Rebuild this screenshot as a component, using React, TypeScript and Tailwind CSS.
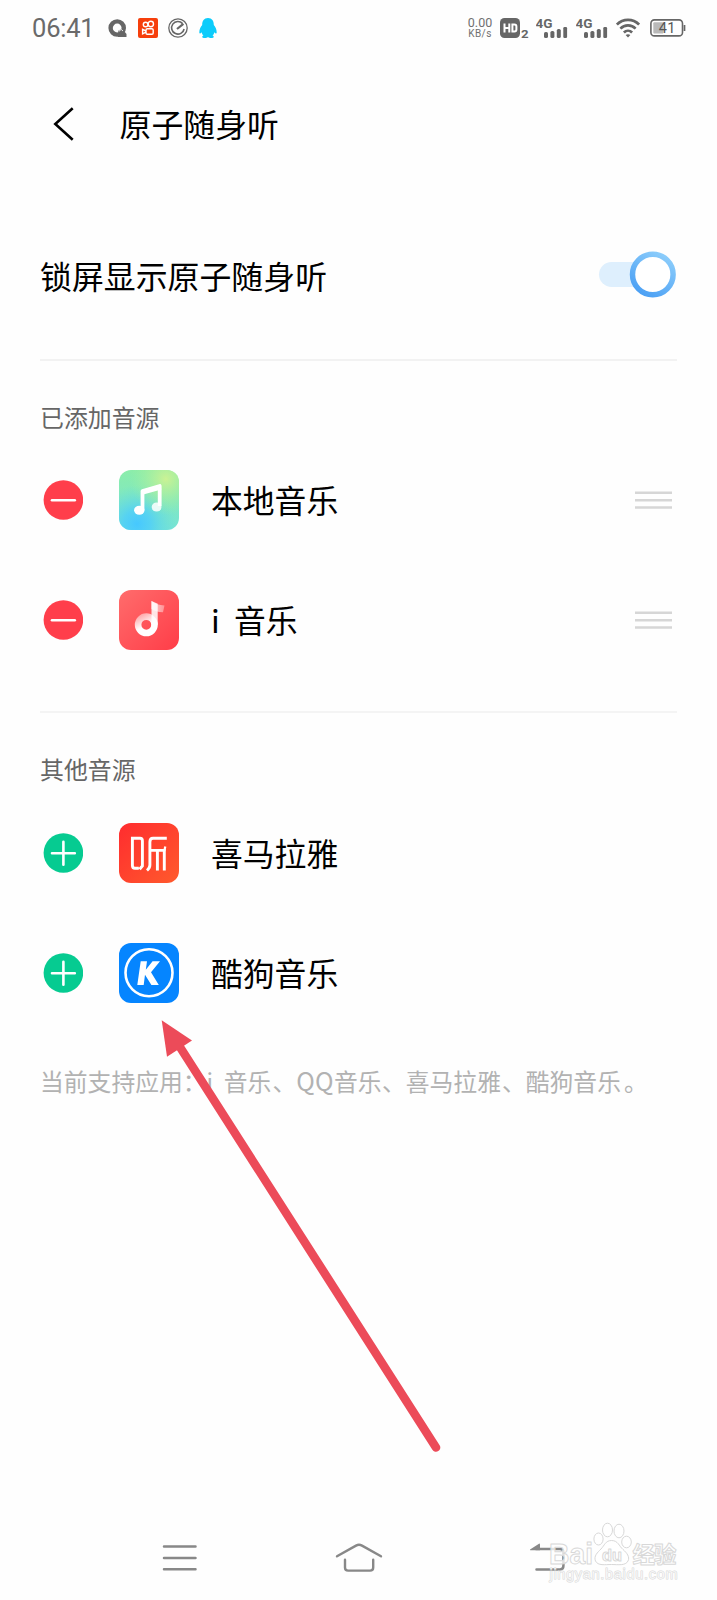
import React from "react";

const CJK = "font-['Noto_Sans_CJK_SC',sans-serif]";

function SignalBars() {
  return (
    <svg className="block h-[24px] w-[32px]" viewBox="0 0 32 24">
      <text x="-0.5" y="11.8" fontFamily="Roboto, sans-serif" fontSize="13.5" fontWeight="700" fill="#666" textLength="17">4G</text>
      <g fill="#666">
        <rect x="8" y="16" width="4" height="6" rx="1.6" />
        <rect x="14.4" y="15" width="4" height="7" rx="1.6" />
        <rect x="20.8" y="13" width="4" height="9" rx="1.6" />
        <rect x="27.3" y="11" width="3.8" height="11" rx="1.2" />
      </g>
    </svg>
  );
}

function StatusBar() {
  return (
    <header className="flex h-[56px] items-center pl-[32px] pr-[31px]">
      <span className="mt-px w-[75px] font-['Roboto',sans-serif] text-[25.5px] leading-none tracking-[-0.2px] text-[#6a6a6a]">06:41</span>
      <div className="flex items-center">
        <svg className="mr-[11px] block h-[20px] w-[20px]" viewBox="0 0 20 20">
          <circle cx="10.2" cy="10" r="6.6" fill="none" stroke="#666" strokeWidth="4.4" />
          <path d="M11 13 L15 10.5 L19.5 16 V19 H11 Z" fill="#666" />
          <path d="M11.6 13.6 L14.2 11.4 L16 13" fill="none" stroke="#fefefe" strokeWidth=".9" />
        </svg>
        <svg className="mr-[10px] block h-[20px] w-[20px]" viewBox="0 0 20 20">
          <rect width="20" height="20" rx="2" fill="#f63f0c" />
          <g fill="none" stroke="#fff" strokeWidth="1.4">
            <circle cx="7.6" cy="6.5" r="2.3" />
            <circle cx="12.8" cy="6" r="2.7" />
            <rect x="8" y="10.7" width="7.2" height="5.6" rx="1.3" />
            <path d="M8 13 L4.6 11.4 V15.9 L8 14.2" />
          </g>
        </svg>
        <svg className="mr-[11px] block h-[20px] w-[20px]" viewBox="0 0 20 20">
          <g fill="none" stroke="#666">
            <circle cx="10" cy="10" r="9.2" strokeWidth="1.3" />
            <path d="M14.6 5.6 A6.3 6.3 0 1 0 16.1 11" strokeWidth="1.6" />
            <path d="M9 11 L15.4 5.8" strokeWidth="2.2" />
          </g>
        </svg>
        <svg className="block h-[20px] w-[18px]" viewBox="0 0 18 20">
          <path d="M9 0 C5 0 3.1 3 3.2 7.1 C1.6 9 .3 11.4 .3 14.4 C.4 16 1.5 15.8 2.6 14.2 C3 15.8 3.6 16.7 4.5 17.4 C2.4 18.3 3 20 5.6 20 C7.2 20 8.2 19.6 9 19 C9.8 19.6 10.8 20 12.4 20 C15 20 15.6 18.3 13.5 17.4 C14.4 16.7 15 15.8 15.4 14.2 C16.5 15.8 17.6 16 17.7 14.4 C17.7 11.4 16.4 9 14.8 7.1 C14.9 3 13 0 9 0Z" fill="#0dccfb" />
        </svg>
      </div>
      <div className="ml-auto flex items-center">
        <div className="mr-[7px] w-[26px] text-center font-['Roboto',sans-serif] text-[#707070]">
          <div className="text-[12.5px] leading-[12px]">0.00</div>
          <div className="text-[10px] leading-[10px] tracking-[0.4px]">KB/s</div>
        </div>
        <svg className="mr-[7px] block h-[24px] w-[29px]" viewBox="0 0 29 24">
          <rect x="0" y="2" width="20" height="20" rx="4.5" fill="#666" />
          <g fill="none" stroke="#fff" strokeWidth="2">
            <path d="M4.5 7.5 V16.5 M9.3 7.5 V16.5 M4.5 12 H9.3" />
            <path d="M12.4 8.4 H14.4 Q16.4 8.4 16.4 10.4 V13.6 Q16.4 15.6 14.4 15.6 H12.4 Z" />
          </g>
          <text x="21" y="22" fontFamily="Roboto, sans-serif" fontSize="11.5" fontWeight="700" fill="#666" textLength="7.6" lengthAdjust="spacingAndGlyphs">2</text>
        </svg>
        <div className="mr-[8px]"><SignalBars /></div>
        <div className="mr-[8px]"><SignalBars /></div>
        <svg className="mr-[10px] block h-[20px] w-[24px]" viewBox="0 0 24 20">
          <g fill="none" stroke="#666" strokeWidth="2.7">
            <path d="M.9 6.6 C7 .4 17 .4 23.1 6.6" />
            <path d="M4.4 10.6 C8.6 6.4 15.4 6.4 19.6 10.6" />
            <path d="M7.9 14.4 C10.2 12.2 13.8 12.2 16.1 14.4" />
          </g>
          <path d="M9.6 17 Q12 15.4 14.4 17 L12 19.4Z" fill="#666" />
        </svg>
        <svg className="block h-[18px] w-[36px]" viewBox="0 0 36 18">
          <rect x=".9" y=".9" width="31.6" height="16" rx="3.5" fill="none" stroke="#666" strokeWidth="1.6" />
          <path d="M34.5 6 V12" stroke="#666" strokeWidth="1.7" />
          <rect x="3.3" y="3.3" width="10.2" height="11.3" rx="1" fill="#b9b9b9" />
          <text x="8.8" y="14.2" fontFamily="Roboto, sans-serif" fontSize="14.5" fill="#555" textLength="16.5">41</text>
        </svg>
      </div>
    </header>
  );
}

function LocalMusicIcon() {
  return (
    <svg className="block h-[60px] w-[60px]" viewBox="0 0 60 60">
      <defs>
        <linearGradient id="lm" x1="0" y1="0" x2="0" y2="1">
          <stop offset="0" stopColor="#8bedaa" />
          <stop offset="1" stopColor="#76e3d6" />
        </linearGradient>
        <radialGradient id="lmb" cx=".3" cy=".9" r=".65">
          <stop offset="0" stopColor="#46c8ff" />
          <stop offset=".35" stopColor="#50cff8" stopOpacity=".85" />
          <stop offset="1" stopColor="#66dddd" stopOpacity="0" />
        </radialGradient>
        <radialGradient id="lmy" cx=".78" cy=".15" r=".6">
          <stop offset="0" stopColor="#cbf294" />
          <stop offset="1" stopColor="#a0efa0" stopOpacity="0" />
        </radialGradient>
      </defs>
      <rect width="60" height="60" rx="12" fill="url(#lm)" />
      <rect width="60" height="60" rx="12" fill="url(#lmb)" />
      <rect width="60" height="60" rx="12" fill="url(#lmy)" />
      <path d="M23.5 40 V21 L40.7 16 V36" fill="none" stroke="#fff" strokeWidth="3.8" strokeLinejoin="round" />
      <path d="M23 23.4 L42 18" stroke="#fff" strokeWidth="3" />
      <ellipse cx="20.3" cy="40.2" rx="5.2" ry="4.5" fill="#fff" />
      <ellipse cx="37.6" cy="37" rx="4.9" ry="4.6" fill="#fff" fillOpacity=".85" />
    </svg>
  );
}

function IMusicIcon() {
  return (
    <svg className="block h-[60px] w-[60px]" viewBox="0 0 60 60">
      <defs>
        <linearGradient id="im" x1="0" y1="0" x2="1" y2="1">
          <stop offset="0" stopColor="#ff6c6c" />
          <stop offset="1" stopColor="#ff3d48" />
        </linearGradient>
        <linearGradient id="imr" x1="0" y1="0" x2=".5" y2="1">
          <stop offset="0" stopColor="#fff" stopOpacity=".5" />
          <stop offset=".65" stopColor="#fff" />
        </linearGradient>
        <linearGradient id="imf" x1="0" y1="0" x2="1" y2="0">
          <stop offset="0" stopColor="#fff" stopOpacity=".9" />
          <stop offset="1" stopColor="#fff" stopOpacity=".45" />
        </linearGradient>
      </defs>
      <rect width="60" height="60" rx="12" fill="url(#im)" />
      <circle cx="27.3" cy="34.8" r="8.2" fill="none" stroke="url(#imr)" strokeWidth="6.6" />
      <path d="M32.5 11 L38.7 13.8 V34.8 H32.5Z" fill="#fff" fillOpacity=".85" />
      <path d="M32.5 11 C36 14 40 15 45.5 15.4 L44 22.2 C39 22 35 21 32.5 19Z" fill="url(#imf)" fillOpacity=".8" />
    </svg>
  );
}

function XimalayaIcon() {
  return (
    <svg className="block h-[60px] w-[60px]" viewBox="0 0 60 60">
      <defs>
        <linearGradient id="xm" x1="0" y1="0" x2="1" y2="1">
          <stop offset="0" stopColor="#ff2c2f" />
          <stop offset="1" stopColor="#ff5a2c" />
        </linearGradient>
      </defs>
      <rect width="60" height="60" rx="12" fill="url(#xm)" />
      <g fill="none" stroke="#fff" strokeWidth="2.9">
        <path d="M19.8 45.3 H16 Q13.4 45.3 13.4 42.5 V15.3 H21 Q23.4 15.3 23.4 18 V43 L20.6 46.3" />
        <path d="M47.8 15.2 H34 Q30.9 15.2 30.9 19 V42 Q30.9 45 28 47.5" />
        <path d="M30.9 27.4 H45.3 V47.5 M38.4 27.4 V47.5" />
        <path d="M45.3 28 L46.3 23.5" strokeWidth="2.2" />
      </g>
    </svg>
  );
}

function KugouIcon() {
  return (
    <svg className="block h-[60px] w-[60px]" viewBox="0 0 60 60">
      <rect width="60" height="60" rx="12" fill="#0585ff" />
      <circle cx="30" cy="29.8" r="23.5" fill="none" stroke="#fff" strokeWidth="2.6" />
      <path d="M21.7 18.2 H28 L26.8 26.8 L33.6 18.2 H41 L32 29.2 L39.8 42 H32.4 L26 31.8 L24.7 42 H18.3Z" fill="#fff" />
    </svg>
  );
}

function ToggleMark({ add }: { add?: boolean }) {
  return (
    <svg className="block h-[40px] w-[40px]" viewBox="0 0 40 40">
      <circle cx="20.4" cy="20" r="19.8" fill={add ? "#06cb91" : "#ff3e4b"} />
      <path d={add ? "M9 20.3 H31.8 M20.4 8.8 V31.8" : "M9 20.3 H31.8"} stroke="#fff" strokeWidth="2.6" strokeLinecap="round" />
    </svg>
  );
}

function DragHandle() {
  return (
    <svg className="ml-auto block h-[20px] w-[37px]" viewBox="0 0 37 20">
      <path d="M0 2.8 H37 M0 10.2 H37 M0 17.5 H37" stroke="#d6d6d6" strokeWidth="2.6" />
    </svg>
  );
}

function SourceRow({ name, icon, add }: { name: string; icon: React.ReactNode; add?: boolean }) {
  return (
    <li className="flex h-[120px] items-center pl-[3px] pr-[5px]">
      <ToggleMark add={add} />
      <div className="ml-[36px]">{icon}</div>
      <span className={`ml-[32px] whitespace-pre text-[31.8px] leading-none text-black ${CJK}`}>{name}</span>
      {!add && <DragHandle />}
    </li>
  );
}

function SectionLabel({ children }: { children: React.ReactNode }) {
  return <h2 className={`flex h-[46px] items-center text-[23.9px] leading-none text-[#666] ${CJK}`}>{children}</h2>;
}

function Watermark() {
  return (
    <svg className="absolute left-[546px] top-[1518px] h-[70px] w-[136px]" viewBox="0 0 136 70">
      <g fill="#fff" fillOpacity=".75" stroke="#d8d8d8" strokeWidth="1" strokeLinejoin="round">
        <text x="3" y="45.5" fontFamily="'Liberation Sans', sans-serif" fontSize="30" fontWeight="700" textLength="44" lengthAdjust="spacingAndGlyphs">Bai</text>
        <ellipse cx="52.5" cy="21" rx="4.6" ry="6" />
        <ellipse cx="61.5" cy="12" rx="5" ry="6.8" />
        <ellipse cx="73" cy="13" rx="5" ry="6.8" />
        <ellipse cx="80.5" cy="24" rx="4.8" ry="5.8" />
        <path d="M65.5 22.5 C72 22.5 73 28 77 31.5 C81 35 84 39 82 43 C79.5 48 72 46.5 65.5 46.5 C59 46.5 52 48 49.5 43 C47.5 38 51.5 34.5 55 31 C58.5 27.5 59.5 22.5 65.5 22.5Z" />
        <text x="56" y="43" fontFamily="'Liberation Sans', sans-serif" fontSize="17" fontWeight="700" textLength="20" lengthAdjust="spacingAndGlyphs">du</text>
        <text x="86.5" y="45" fontFamily="'Noto Sans CJK SC', sans-serif" fontSize="22.5" fontWeight="700" textLength="44">经验</text>
        <text x="3.5" y="61" fontFamily="'Liberation Sans', sans-serif" fontSize="14.5" textLength="128" paintOrder="stroke">jingyan.baidu.com</text>
      </g>
    </svg>
  );
}

export default function App() {
  return (
    <div className="relative flex h-[1600px] w-[717px] flex-col overflow-hidden bg-[#fefefe]">
      <StatusBar />
      <div className="flex h-[136px] items-center pl-[52px]">
        <svg className="block h-[36px] w-[24px]" viewBox="0 0 24 36">
          <path d="M20.7 2.3 L3.3 18 L20.7 33.7" fill="none" stroke="#000" strokeWidth="2.6" />
        </svg>
        <h1 className={`ml-[43.5px] text-[31.9px] leading-none text-black ${CJK}`}>原子随身听</h1>
      </div>
      <main className="flex flex-col px-[40px]">
        <div className="flex h-[169px] items-center justify-between border-b-2 border-[#f2f2f2] pr-px">
          <span className={`text-[31.9px] leading-none text-black ${CJK}`}>锁屏显示原子随身听</span>
          <svg className="mb-[3px] block h-[48px] w-[78px]" viewBox="0 0 78 48">
            <defs>
              <linearGradient id="ring" x1=".8" y1="0" x2=".2" y2="1">
                <stop offset="0" stopColor="#8ccdfb" />
                <stop offset="1" stopColor="#4a9ff4" />
              </linearGradient>
            </defs>
            <rect x="1" y="12" width="60" height="25" rx="12.5" fill="#deeffd" />
            <circle cx="54.8" cy="24.5" r="20.3" fill="#fff" stroke="url(#ring)" strokeWidth="5.5" />
          </svg>
        </div>
        <section className="flex h-[352px] flex-col border-b-2 border-[#f4f4f4] pt-[33px]">
          <SectionLabel>已添加音源</SectionLabel>
          <ul>
            <SourceRow name="本地音乐" icon={<LocalMusicIcon />} />
            <SourceRow name="i  音乐" icon={<IMusicIcon />} />
          </ul>
        </section>
        <section className="flex flex-col pt-[33px]">
          <SectionLabel>其他音源</SectionLabel>
          <ul className="mt-px">
            <SourceRow name="喜马拉雅" icon={<XimalayaIcon />} add />
            <SourceRow name="酷狗音乐" icon={<KugouIcon />} add />
          </ul>
        </section>
        <p className={`mt-[35px] h-[24px] whitespace-pre text-[23.8px] leading-[24px] text-[#b2b2b2] ${CJK}`}>
          当前支持应用：i{"  "}音乐<span className="ml-px">、</span><span className="text-[25px] leading-none tracking-[0.3px]">QQ</span>音乐<span className="ml-[0.5px]">、</span>喜马拉雅<span className="ml-px">、</span>酷狗音乐<span className="ml-[3px]">。</span>
        </p>
      </main>
      <nav className="mt-auto flex h-[84px] items-center pl-[162px]">
        <svg className="block h-[32px] w-[36px]" viewBox="0 0 36 32">
          <path d="M2 4.6 H33.5 M2 16 H33.5 M2 27.3 H33.5" stroke="#888" strokeWidth="2.5" strokeLinecap="round" />
        </svg>
        <svg className="ml-[135px] block h-[32px] w-[52px]" viewBox="0 0 52 32">
          <g fill="none" stroke="#888" strokeWidth="2.4" strokeLinecap="round">
            <path d="M4 14.3 L23 3.6 Q26 1.9 29 3.6 L48 14.3" />
            <path d="M12 17.8 V25.5 Q12 28.6 15.1 28.6 H37.1 Q40.2 28.6 40.2 25.5 V17.8" />
          </g>
        </svg>
        <svg className="ml-[143px] block h-[32px] w-[38px]" viewBox="0 0 38 32">
          <path d="M8 7 H32 Q35.4 7 35.4 10.4 V24 Q35.4 27.4 32 27.4 H8.5" fill="none" stroke="#888" strokeWidth="2.5" strokeLinecap="round" />
          <path d="M2 7.5 L11 1.7 Q12 1.3 12 3 V8.2 H2.2Z" fill="#888" />
        </svg>
      </nav>
      <svg className="pointer-events-none absolute left-[150px] top-[1010px] h-[450px] w-[300px]" viewBox="150 1010 300 450">
        <path d="M178 1044 L436 1447.5" stroke="#ec4b59" strokeWidth="8.6" strokeLinecap="round" />
        <path d="M161.7 1020.3 L192 1040.5 L167 1056.8Z" fill="#ec4b59" />
      </svg>
      <Watermark />
    </div>
  );
}
